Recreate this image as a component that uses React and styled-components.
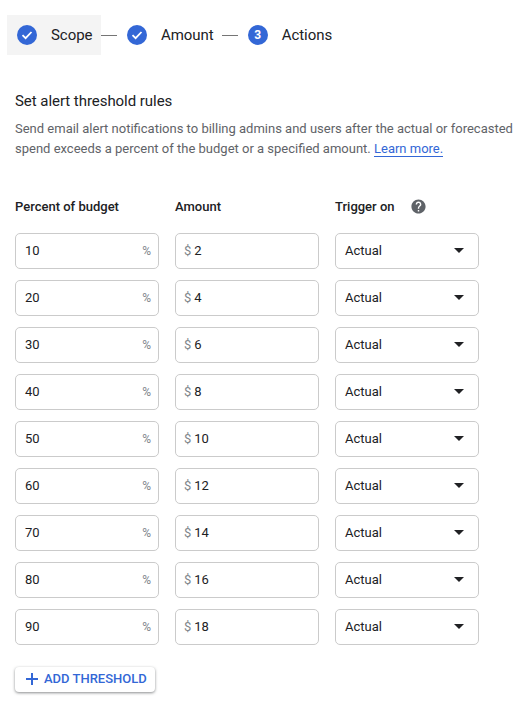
import React from 'react';
import styled, { createGlobalStyle } from 'styled-components';

const GlobalStyle = createGlobalStyle`
  html, body {
    margin: 0;
    padding: 0;
    background: #fff;
    font-family: Roboto, "Liberation Sans", sans-serif;
  }
`;

const Page = styled.div`
  width: 530px;
  height: 704px;
  overflow: hidden;
  padding: 15px 0 0 7px;
  box-sizing: border-box;
`;

const Stepper = styled.div`
  display: flex;
  align-items: center;
  height: 40px;
`;

const Step = styled.div`
  display: flex;
  align-items: center;
  height: 40px;
  flex: none;
  padding: ${(p) => (p.$active ? '0 8px 0 10px' : '0')};
  width: ${(p) => (p.$active ? '94px' : 'auto')};
  box-sizing: border-box;
  background: ${(p) => (p.$active ? '#f4f4f4' : 'transparent')};
`;

const StepBadge = styled.span`
  width: 20px;
  height: 20px;
  border-radius: 50%;
  background: #3367d6;
  color: #fff;
  display: flex;
  align-items: center;
  justify-content: center;
  font-size: 12px;
  font-weight: 700;
  flex: none;
`;

const StepLabel = styled.span`
  margin-left: 14px;
  font-size: 15px;
  letter-spacing: -0.05px;
  color: #202124;
`;

const Connector = styled.span`
  width: 16px;
  height: 1px;
  background: #757575;
  flex: none;
  margin: 0 10px 0 ${(p) => p.$before}px;
`;

const Content = styled.div`
  padding-left: 8px;
`;

const Title = styled.h2`
  margin: 36px 0 0;
  font-size: 15px;
  line-height: 20px;
  font-weight: 400;
  letter-spacing: -0.05px;
  color: #202124;
`;

const Description = styled.p`
  margin: 8px 0 0;
  width: 510px;
  font-size: 13px;
  line-height: 20px;
  color: #5f6368;
  white-space: nowrap;
`;

const LearnMore = styled.a`
  color: #3367d6;
  text-decoration: none;
  border-bottom: 1px solid #3367d6;
`;

const Grid = styled.div`
  display: grid;
  grid-template-columns: repeat(3, 144px);
  column-gap: 16px;
  row-gap: 11px;
  margin-top: 37px;
`;

const HeaderCell = styled.div`
  display: flex;
  align-items: center;
  height: 20px;
  margin-bottom: 6px;
  font-size: 13px;
  font-weight: 500;
  color: #202124;
`;

const HelpIcon = styled.svg`
  width: 17px;
  height: 17px;
  margin-left: 15px;
  fill: #5f6368;
`;

const Field = styled.div`
  height: 36px;
  box-sizing: border-box;
  border: 1px solid #cbcbcb;
  border-radius: 5px;
  display: flex;
  align-items: center;
  padding: 0 7px 2px ${(p) => p.$left}px;
  font-size: 13px;
  color: #202124;
`;

const Value = styled.span`
  flex: 1;
`;

const Suffix = styled.span`
  margin-top: 2px;
  font-size: 12px;
  color: #80868b;
`;

const Prefix = styled.span`
  font-size: 13px;
  color: #80868b;
  margin-right: 3px;
`;

const Caret = styled.span`
  width: 0;
  height: 0;
  border-left: 5px solid transparent;
  border-right: 5px solid transparent;
  border-top: 5px solid #202124;
  margin-right: 7px;
`;

const AddButton = styled.button`
  display: flex;
  align-items: center;
  height: 25px;
  width: 140px;
  margin-top: 22px;
  padding: 0 0 2px 10px;
  border: 0;
  border-radius: 4px;
  background: #fff;
  box-shadow: 0 1px 3px rgba(60, 64, 67, 0.6);
  color: #3367d6;
  font-family: inherit;
  font-size: 13px;
  font-weight: 500;
  white-space: nowrap;
`;

const PlusIcon = styled.svg`
  width: 14px;
  height: 14px;
  margin-right: 5px;
  flex: none;
`;

const rows = [
  [10, 2],
  [20, 4],
  [30, 6],
  [40, 8],
  [50, 10],
  [60, 12],
  [70, 14],
  [80, 16],
  [90, 18],
];

const Check = () => (
  <svg width="14" height="14" viewBox="0 0 14 14" fill="none">
    <path d="M2.5 7.2 L5.6 10.2 L11.5 4" stroke="#fff" strokeWidth="1.8" />
  </svg>
);

const App = () => (
  <Page>
    <GlobalStyle />
    <Stepper>
      <Step $active>
        <StepBadge><Check /></StepBadge>
        <StepLabel>Scope</StepLabel>
      </Step>
      <Connector $before={0} />
      <Step>
        <StepBadge><Check /></StepBadge>
        <StepLabel>Amount</StepLabel>
      </Step>
      <Connector $before={8} />
      <Step>
        <StepBadge>3</StepBadge>
        <StepLabel>Actions</StepLabel>
      </Step>
    </Stepper>
    <Content>
      <Title>Set alert threshold rules</Title>
      <Description>
        Send email alert notifications to billing admins and users after the actual or forecasted
        <br />
        spend exceeds a percent of the budget or a specified amount. <LearnMore>Learn more.</LearnMore>
      </Description>
      <Grid>
        <HeaderCell>Percent of budget</HeaderCell>
        <HeaderCell>Amount</HeaderCell>
        <HeaderCell>
          Trigger on
          <HelpIcon viewBox="0 0 24 24">
            <path d="M12 2C6.48 2 2 6.48 2 12s4.48 10 10 10 10-4.48 10-10S17.52 2 12 2zm1 17h-2v-2h2v2zm2.07-7.75l-.9.92C13.45 12.9 13 13.5 13 15h-2v-.5c0-1.1.45-2.1 1.17-2.83l1.24-1.26c.37-.36.59-.86.59-1.41 0-1.1-.9-2-2-2s-2 .9-2 2H8c0-2.21 1.79-4 4-4s4 1.79 4 4c0 .88-.36 1.68-.93 2.25z" />
          </HelpIcon>
        </HeaderCell>
        {rows.map(([percent, amount]) => (
          <React.Fragment key={percent}>
            <Field $left={9}>
              <Value>{percent}</Value>
              <Suffix>%</Suffix>
            </Field>
            <Field $left={8}>
              <Prefix>$</Prefix>
              <Value>{amount}</Value>
            </Field>
            <Field $left={9}>
              <Value>Actual</Value>
              <Caret />
            </Field>
          </React.Fragment>
        ))}
      </Grid>
      <AddButton>
        <PlusIcon viewBox="0 0 14 14">
          <path d="M6 1h2v5h5v2H8v5H6V8H1V6h5z" fill="#3367d6" />
        </PlusIcon>
        ADD THRESHOLD
      </AddButton>
    </Content>
  </Page>
);

export default App;
